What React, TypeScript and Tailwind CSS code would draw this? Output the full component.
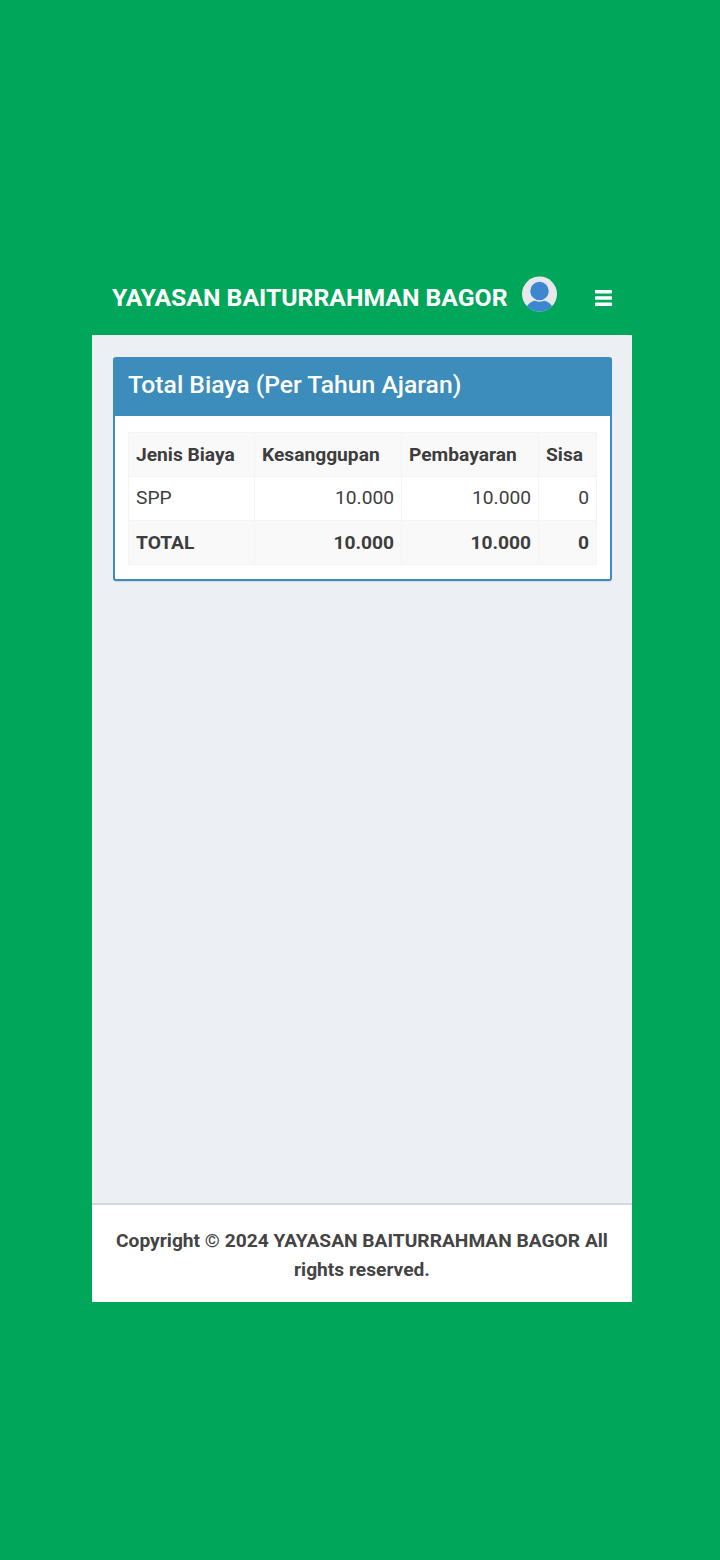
import React from "react";

const rows = [
  { name: "SPP", kesanggupan: "10.000", pembayaran: "10.000", sisa: "0" },
];

const UserAvatar = () => (
  <svg viewBox="0 0 35 36" className="h-[36px] w-[35px]">
    <defs>
      <clipPath id="avatar-clip">
        <circle cx="17.5" cy="18" r="17.5" />
      </clipPath>
    </defs>
    <circle cx="17.5" cy="18" r="17.5" fill="#e6e8ec" />
    <g clipPath="url(#avatar-clip)" fill="#3c87cf">
      <ellipse cx="17.5" cy="35" rx="14" ry="11" />
      <circle cx="17.5" cy="15" r="10" stroke="#e6e8ec" strokeWidth="1.5" />
    </g>
  </svg>
);

const Bars = () => (
  <svg viewBox="0 0 17 16" className="h-[16px] w-[17px]" fill="#ffffff">
    <rect x="0" y="0" width="17" height="3.6" rx="0.8" />
    <rect x="0" y="6.2" width="17" height="3.6" rx="0.8" />
    <rect x="0" y="12.4" width="17" height="3.6" rx="0.8" />
  </svg>
);

export default function App() {
  return (
    <div className="flex h-[1560px] w-full flex-col items-center justify-center bg-[#00a65a] pl-[4px] font-['Roboto',sans-serif]">
      <div className="w-[540px]">
        <header className="flex h-[77px] items-center pl-[20px] text-white">
          <span className="mt-[3px] text-[24.75px] font-bold leading-none whitespace-nowrap">
            YAYASAN BAITURRAHMAN BAGOR
          </span>
          <span className="mb-[5px] ml-[14px]">
            <UserAvatar />
          </span>
          <span className="ml-[38px] mt-[2px]">
            <Bars />
          </span>
        </header>

        <main className="h-[868px] bg-[#ecf0f5] px-[21px] pt-[22px]">
          <section className="w-[499px] rounded-[3px] border-2 border-[#3c8dbc] bg-white shadow-[0_1px_1px_rgba(0,0,0,0.1)]">
            <h3 className="flex h-[57px] items-center bg-[#3c8dbc] px-[13px] pb-[6px] text-[24.7px] font-medium text-white">
              Total Biaya (Per Tahun Ajaran)
            </h3>
            <div className="px-[13px] pt-[16px] pb-[14px]">
              <table className="w-[468px] table-fixed border-collapse text-[19.2px] leading-[28px] text-[#3d3d3d]">
                <colgroup>
                  <col className="w-[126px]" />
                  <col className="w-[147px]" />
                  <col className="w-[137px]" />
                  <col className="w-[58px]" />
                </colgroup>
                <thead>
                  <tr className="h-[44px] bg-[#f9f9f9] font-bold">
                    <th className="border border-[#f4f4f4] px-[7px] text-left font-bold">Jenis Biaya</th>
                    <th className="border border-[#f4f4f4] px-[7px] text-left font-bold">Kesanggupan</th>
                    <th className="border border-[#f4f4f4] px-[7px] text-left font-bold">Pembayaran</th>
                    <th className="border border-[#f4f4f4] px-[7px] text-left font-bold">Sisa</th>
                  </tr>
                </thead>
                <tbody>
                  {rows.map((r) => (
                    <tr key={r.name} className="h-[44px]">
                      <td className="border border-[#f4f4f4] px-[7px] pb-[1px]">{r.name}</td>
                      <td className="border border-[#f4f4f4] px-[7px] pb-[1px] text-right">{r.kesanggupan}</td>
                      <td className="border border-[#f4f4f4] px-[7px] pb-[1px] text-right">{r.pembayaran}</td>
                      <td className="border border-[#f4f4f4] px-[7px] pb-[1px] text-right">{r.sisa}</td>
                    </tr>
                  ))}
                  <tr className="h-[44px] bg-[#f9f9f9] font-bold">
                    <td className="border border-[#f4f4f4] px-[7px]">TOTAL</td>
                    <td className="border border-[#f4f4f4] px-[7px] text-right">10.000</td>
                    <td className="border border-[#f4f4f4] px-[7px] text-right">10.000</td>
                    <td className="border border-[#f4f4f4] px-[7px] text-right">0</td>
                  </tr>
                </tbody>
              </table>
            </div>
          </section>
        </main>

        <footer className="h-[99px] border-t-2 border-[#d2d6de] bg-white px-[20px] pt-[21px] text-center text-[19.2px] font-bold leading-[29px] text-[#444444]">
          Copyright © 2024 YAYASAN BAITURRAHMAN BAGOR All rights reserved.
        </footer>
      </div>
    </div>
  );
}
